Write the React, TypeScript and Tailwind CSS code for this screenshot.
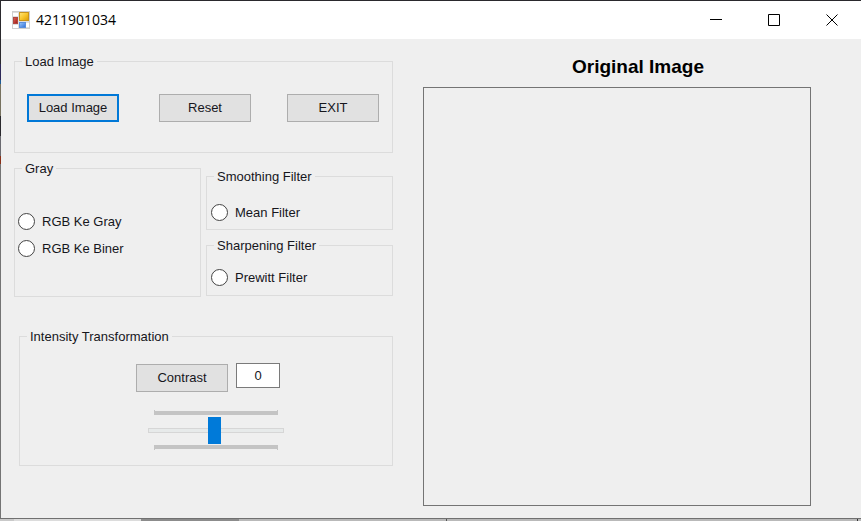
import { useState } from "react";
import type { ReactNode } from "react";

function AppIcon() {
  return (
    <svg width="18" height="18" viewBox="0 0 18 18" aria-hidden="true">
      <defs>
        <linearGradient id="yellow" x1="0" y1="0" x2="1" y2="1">
          <stop offset="0" stopColor="#ffe680" />
          <stop offset="0.5" stopColor="#f8c62c" />
          <stop offset="1" stopColor="#d99a08" />
        </linearGradient>
        <linearGradient id="red" x1="0" y1="0" x2="1" y2="1">
          <stop offset="0" stopColor="#e0655a" />
          <stop offset="1" stopColor="#9c1712" />
        </linearGradient>
        <linearGradient id="blue" x1="0" y1="0" x2="1" y2="1">
          <stop offset="0" stopColor="#9cc8fb" />
          <stop offset="1" stopColor="#2f6fd8" />
        </linearGradient>
      </defs>
      <rect x="0.5" y="0.5" width="17" height="17" fill="#dedede" stroke="#cfcfcf" />
      <rect x="1" y="2" width="5" height="3" fill="#fff" />
      <rect x="1" y="14" width="5" height="3" fill="#fff" />
      <rect x="14" y="12" width="3" height="4" fill="#fff" />
      <rect x="7.5" y="1.5" width="9" height="8" fill="url(#yellow)" stroke="#c8941c" />
      <rect x="1.5" y="6.5" width="4" height="6" fill="url(#red)" stroke="#b0463f" />
      <rect x="7.5" y="11.5" width="6" height="5" fill="url(#blue)" stroke="#5a8fdc" />
    </svg>
  );
}

function CaptionButton({ label, children }: { label: string; children: ReactNode }) {
  return (
    <button type="button" aria-label={label} className="flex w-[58px] items-center justify-center">
      <svg width="12" height="12" viewBox="0 0 12 12" fill="none" stroke="#000" aria-hidden="true">
        {children}
      </svg>
    </button>
  );
}

function Group({ title, className = "", children }: { title: string; className?: string; children: ReactNode }) {
  return (
    <fieldset className={`min-w-0 border border-[#dcdcdc] ${className}`}>
      <legend className="ml-[7px] px-[3px] leading-[17px]">{title}</legend>
      {children}
    </fieldset>
  );
}

function PushButton({ children, className = "border border-[#adadad]" }: { children: ReactNode; className?: string }) {
  return (
    <button type="button" className={`h-7 w-[92px] shrink-0 bg-[#e1e1e1] ${className}`}>
      {children}
    </button>
  );
}

function Radio({ label }: { label: string }) {
  return (
    <label className="flex items-center gap-[7px] leading-[17px]">
      <input
        type="radio"
        name="operation"
        value={label}
        className="size-[17px] shrink-0 appearance-none rounded-full border border-[#444] bg-white checked:border-[5px]"
      />
      {label}
    </label>
  );
}

function Ticks({ flip = false }: { flip?: boolean }) {
  return (
    <div className={`flex h-[5px] w-[124px] border-x border-[#c4c4c4] ${flip ? "items-start" : "items-end"}`}>
      <div className="h-1 flex-1 bg-[#c4c4c4]" />
    </div>
  );
}

export default function App() {
  const [contrast, setContrast] = useState(0);

  return (
    <div className="flex min-h-screen flex-col border-t border-[#2a292d] bg-[#efefef] font-['Liberation_Sans',sans-serif] text-[13px] text-[#16161c]">
      <div className="flex flex-1">
        <div className="flex w-px shrink-0 flex-col bg-[#747474]">
          <div className="h-[63px] bg-[#2a292d]" />
          <div className="h-4 bg-[#2d2857]" />
          <div className="h-1 bg-[#1f5a94]" />
          <div className="h-8 bg-[#77725f]" />
          <div className="h-5 bg-[#2a292d]" />
          <div className="h-5 bg-[#6a6a70]" />
          <div className="h-2 bg-[#8a3018]" />
        </div>
        <div className="flex min-w-0 flex-1 flex-col">
          <header className="flex h-[38px] bg-white pl-[11px]">
            <div className="flex flex-1 items-center gap-[6px]">
              <AppIcon />
              <h1 className="font-['Open_Sans',sans-serif] text-sm text-black">4211901034</h1>
            </div>
            <CaptionButton label="Minimize">
              <path d="M0 5.5h12" />
            </CaptionButton>
            <CaptionButton label="Maximize">
              <path d="M0.5 0.5h11v11h-11z" />
            </CaptionButton>
            <CaptionButton label="Close">
              <path d="M0.5 0.5l11 11M11.5 0.5l-11 11" />
            </CaptionButton>
          </header>

          <main className="grid flex-1 grid-cols-[379fr_388fr] gap-[30px] pr-[50px] pb-3 pl-[13px]">
            <div className="flex min-w-0 flex-col pt-[14px]">
              <Group title="Load Image" className="mb-[7px]">
                <div className="flex pt-6 pb-[30px] pl-3">
                  <PushButton className="mr-10 border-2 border-[#0078d7]">Load Image</PushButton>
                  <PushButton className="mr-9 border border-[#adadad]">Reset</PushButton>
                  <PushButton>EXIT</PushButton>
                </div>
              </Group>

              <div className="mb-[31px] grid grid-cols-2 gap-[5px]">
                <Group title="Gray">
                  <div className="flex flex-col gap-[10px] pt-9 pb-[39px] pl-[3px]">
                    <Radio label="RGB Ke Gray" />
                    <Radio label="RGB Ke Biner" />
                  </div>
                </Group>
                <div className="flex flex-col gap-[7px] pt-2">
                  <Group title="Smoothing Filter">
                    <div className="pt-[19px] pb-2 pl-1">
                      <Radio label="Mean Filter" />
                    </div>
                  </Group>
                  <Group title="Sharpening Filter">
                    <div className="pt-[15px] pb-[9px] pl-1">
                      <Radio label="Prewitt Filter" />
                    </div>
                  </Group>
                </div>
              </div>

              <Group title="Intensity Transformation" className="ml-[5px]">
                <div className="flex flex-col items-center pt-[18px] pb-[15px]">
                  <div className="flex items-start gap-2 pl-1">
                    <div className="pt-px">
                      <PushButton>Contrast</PushButton>
                    </div>
                    <input
                      type="text"
                      aria-label="Contrast value"
                      value={contrast}
                      onChange={(event) => setContrast(Number(event.target.value) || 0)}
                      className="h-[25px] w-11 border border-[#7a7a7a] bg-white text-center"
                    />
                  </div>
                  <div className="flex flex-col items-center pt-[18px] pl-5">
                    <Ticks />
                    <input
                      type="range"
                      aria-label="Contrast"
                      min={-125}
                      max={131}
                      value={contrast}
                      onChange={(event) => setContrast(Number(event.target.value))}
                      className="my-px h-7 w-[136px] appearance-none bg-transparent [&::-webkit-slider-runnable-track]:h-[5px] [&::-webkit-slider-runnable-track]:border [&::-webkit-slider-runnable-track]:border-[#d6d6d6] [&::-webkit-slider-runnable-track]:bg-[#e7eaea] [&::-webkit-slider-thumb]:-mt-[12px] [&::-webkit-slider-thumb]:h-[27px] [&::-webkit-slider-thumb]:w-[13px] [&::-webkit-slider-thumb]:appearance-none [&::-webkit-slider-thumb]:bg-[#007ad9]"
                    />
                    <Ticks flip />
                  </div>
                </div>
              </Group>
            </div>

            <section className="flex min-w-0 flex-col pt-4">
              <h2 className="mb-2 pl-[42px] text-center text-[19px] leading-6 font-bold text-black">
                Original Image
              </h2>
              <div className="flex-1 border border-[#747474]" />
            </section>
          </main>
        </div>
      </div>
      <footer className="flex h-[3px] border-t border-[#707070] bg-[#b9b9b9]">
        <div className="w-[14px] bg-[#c9c9c9]" />
        <div className="w-[127px] bg-[#dcdcdc]" />
        <div className="w-[98px] bg-[#8c8c8c]" />
        <div className="w-[208px] border-r border-[#555]" />
        <div className="flex-1" />
        <div className="w-1 border-l border-[#333]" />
      </footer>
    </div>
  );
}
